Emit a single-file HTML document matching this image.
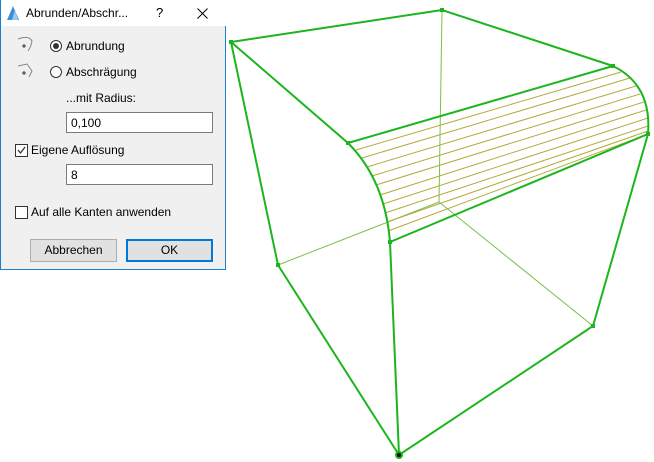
<!DOCTYPE html>
<html><head><style>
body{margin:0;width:654px;height:462px;background:#fff;position:relative;overflow:hidden;font-family:"Liberation Sans",sans-serif;font-size:12px;color:#000}
.dlg{position:absolute;left:0;top:0;width:226px;height:270px;background:#f0f0f0;border:1px solid #1a7fd0;border-top:none;box-sizing:border-box}
.tb{position:absolute;left:0;top:0;width:225px;height:26px;background:#fff}
.t{position:absolute;white-space:nowrap}
.inp{position:absolute;left:65px;width:147px;height:21px;background:#fff;border:1px solid #7a7a7a;box-sizing:border-box;padding:3px 4px}
.rad{position:absolute;width:12px;height:12px;border:1px solid #333;border-radius:50%;box-sizing:border-box;background:#fff}
.cb{position:absolute;width:13px;height:13px;border:1px solid #333;box-sizing:border-box;background:#fff}
.btn{position:absolute;top:239px;width:87px;height:23px;box-sizing:border-box;border:1px solid #adadad;background:#e1e1e1;text-align:center;line-height:20px}
</style></head><body>
<svg width="654" height="462" style="position:absolute;left:0;top:0">
<g stroke="#7cc04a" stroke-width="1" fill="none">
<line x1="442" y1="10" x2="439" y2="202"/><line x1="439" y1="202" x2="593" y2="326"/><line x1="439" y1="202" x2="278" y2="265"/>
</g>
<g stroke="#b5a93a" stroke-width="1">
<line x1="356" y1="150" x2="621" y2="72"/><line x1="362" y1="158" x2="630" y2="78"/><line x1="367" y1="167" x2="636" y2="86"/><line x1="372" y1="176" x2="640" y2="94"/><line x1="376" y1="185" x2="644" y2="102"/><line x1="380" y1="195" x2="646" y2="110"/><line x1="383" y1="204" x2="648" y2="118"/><line x1="385" y1="213" x2="648" y2="126"/><line x1="387" y1="222" x2="648" y2="131"/><line x1="388" y1="231" x2="648" y2="134"/>
</g>
<g stroke="#1db51d" stroke-width="2" fill="none">
<path d="M231 42L442 10L613 66M231 42L348 143L613 66M231 42L278 265L399 455L593 326L648 134L390 242L399 455"/>
<path d="M348 143Q385 180 390 242"/><path d="M613 66Q652 85 648 134"/>
</g>
<g fill="#1db51d"><rect x="229" y="40" width="4" height="4"/><rect x="440" y="8" width="4" height="4"/><rect x="611" y="64" width="4" height="4"/><rect x="646" y="132" width="4" height="4"/><rect x="346" y="141" width="4" height="4"/><rect x="388" y="240" width="4" height="4"/><rect x="276" y="263" width="4" height="4"/><rect x="591" y="324" width="4" height="4"/></g>
<circle cx="399" cy="455" r="4" fill="#1db51d"/><circle cx="399" cy="455" r="2" fill="#000"/>
</svg>
<div class="dlg">
<div class="tb">
<svg style="position:absolute;left:5px;top:5px" width="14" height="16"><path d="M1 15L7 1L13 15Z" fill="#3c8fd8"/><path d="M6 15L9 5L12 15Z" fill="#9cc9f0"/></svg>
<div class="t" style="left:25px;top:6px;font-size:12px">Abrunden/Abschr...</div>
<div class="t" style="left:155px;top:5px;font-size:13px">?</div>
<svg style="position:absolute;left:196px;top:8px" width="11" height="11"><path d="M0.5 0.5L10.5 10.5M10.5 0.5L0.5 10.5" stroke="#000" stroke-width="1"/></svg>
</div>
<svg style="position:absolute;left:16px;top:35px" width="20" height="55" stroke="#888" fill="none"><path d="M1 4Q12 0 15 6Q14 12 11 16"/><path d="M5 11h4M7 9v4" stroke="#333"/><path d="M1 31L10 29L15 36L12 42"/><path d="M5 38h4M7 36v4" stroke="#333"/></svg>
<div class="rad" style="left:49px;top:40px"><div style="position:absolute;left:2px;top:2px;width:6px;height:6px;border-radius:50%;background:#333"></div></div>
<div class="t" style="left:65px;top:39px">Abrundung</div>
<div class="rad" style="left:49px;top:66px"></div>
<div class="t" style="left:65px;top:65px">Abschrägung</div>
<div class="t" style="left:65px;top:91px">...mit Radius:</div>
<div class="inp" style="top:112px">0,100</div>
<div class="cb" style="left:14px;top:144px"><svg width="11" height="11" style="position:absolute;left:0;top:0"><path d="M2 5L4.5 8L9 2" stroke="#333" stroke-width="1.3" fill="none"/></svg></div>
<div class="t" style="left:30px;top:143px">Eigene Auflösung</div>
<div class="inp" style="top:164px">8</div>
<div class="cb" style="left:14px;top:206px"></div>
<div class="t" style="left:30px;top:205px">Auf alle Kanten anwenden</div>
<div class="btn" style="left:29px">Abbrechen</div>
<div class="btn" style="left:125px;border:2px solid #0078d7;line-height:19px">OK</div>
</div>
</body></html>
